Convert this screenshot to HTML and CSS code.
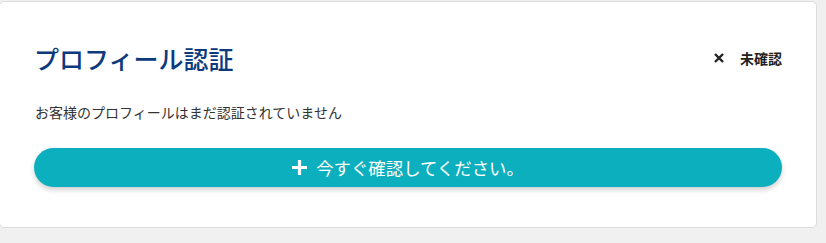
FILE: index.html
```html
<!DOCTYPE html>
<html lang="ja">
<head>
<meta charset="utf-8">
<link rel="stylesheet" href="styles.css">
</head>
<body>
<div class="card">
  <div class="header">
    <h2 class="title">プロフィール認証</h2>
    <div class="status">
      <svg class="x-icon" width="10" height="10" viewBox="0 0 10 10"><path d="M1 1 L9 9 M9 1 L1 9" stroke="#222" stroke-width="2.4" stroke-linecap="butt"/></svg>
      <span>未確認</span>
    </div>
  </div>
  <p class="desc">お客様のプロフィールはまだ認証されていません</p>
  <button class="verify-btn">
    <svg class="plus-icon" width="15" height="15" viewBox="0 0 15 15"><path d="M7.5 0 V15 M0 7.5 H15" stroke="#fff" stroke-width="3.2"/></svg>
    <span>今すぐ確認してください。</span>
  </button>
</div>
</body>
</html>
```
FILE: styles.css
```css
html, body {
  margin: 0;
  padding: 0;
  background: #f0f0f0;
}
body {
  font-family: "Noto Sans CJK JP", "Noto Sans", sans-serif;
}
.card {
  margin: 1px 9px 0 -1px;
  background: #fff;
  border: 1px solid #dcdcdc;
  border-radius: 5px;
  padding: 39px 34px 40px 34px;
}
.header {
  display: flex;
  align-items: center;
  justify-content: space-between;
  height: 34px;
}
.title {
  margin: 0;
  font-size: 25px;
  font-weight: 500;
  color: #0c3a7c;
  line-height: 34px;
}
.status {
  display: flex;
  align-items: center;
  gap: 16px;
  font-size: 14px;
  font-weight: 700;
  color: #222;
}
.desc {
  margin: 27px 0 26px 1px;
  font-size: 14px;
  line-height: 20px;
  color: #333;
}
.verify-btn {
  display: flex;
  align-items: center;
  justify-content: center;
  gap: 9px;
  width: 100%;
  height: 39px;
  border: none;
  border-radius: 20px;
  background: #0cafbd;
  color: #fff;
  font-family: inherit;
  font-size: 17.4px;
  box-shadow: 0 3px 5px rgba(0,0,0,0.18);
  padding: 0;
}
```
